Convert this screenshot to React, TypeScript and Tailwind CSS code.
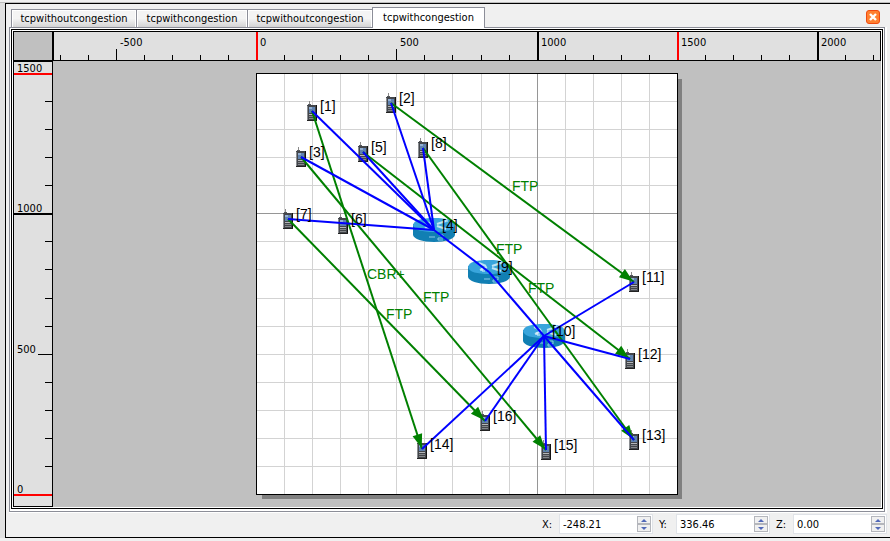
import React from "react";

type Point = { x: number; y: number };
type Node = Point & { id: number; kind: "host" | "router" };

const nodes: Node[] = [
  { id: 1, x: 312, y: 111, kind: "host" },
  { id: 2, x: 391, y: 103, kind: "host" },
  { id: 3, x: 301, y: 157, kind: "host" },
  { id: 4, x: 434, y: 230, kind: "router" },
  { id: 5, x: 363, y: 152, kind: "host" },
  { id: 6, x: 343, y: 224, kind: "host" },
  { id: 7, x: 288, y: 219, kind: "host" },
  { id: 8, x: 423, y: 148, kind: "host" },
  { id: 9, x: 489, y: 272, kind: "router" },
  { id: 10, x: 544, y: 336, kind: "router" },
  { id: 11, x: 634, y: 282, kind: "host" },
  { id: 12, x: 630, y: 359, kind: "host" },
  { id: 13, x: 634, y: 440, kind: "host" },
  { id: 14, x: 422, y: 449, kind: "host" },
  { id: 15, x: 546, y: 450, kind: "host" },
  { id: 16, x: 485, y: 421, kind: "host" },
];

const links: [number, number][] = [
  [1, 4], [2, 4], [3, 4], [5, 4], [7, 4], [8, 4], [4, 9],
  [9, 10], [10, 11], [10, 12], [10, 13], [10, 14], [10, 15], [10, 16],
];

const flows: [number, number, string][] = [
  [1, 14, "CBR+"], [2, 11, "FTP"], [3, 15, "FTP"],
  [5, 12, "FTP"], [7, 16, "FTP"], [8, 13, "FTP"],
];

const find = (id: number) => nodes.find((n) => n.id === id)!;

// One ruler step is 100 units; 1500 units span 421 pixels.
const step = (n: number) => Math.round((n * 421) / 15);
const range = (from: number, to: number) =>
  Array.from({ length: to - from + 1 }, (_, i) => from + i);

function Host({ x, y }: Point) {
  return (
    <g transform={`translate(${x - 5} ${y - 10})`} shapeRendering="crispEdges">
      <rect x="2" y="0" width="1" height="4" fill="#8a8a8a" />
      <rect x="1" y="3" width="3" height="1" fill="#55585c" />
      <rect x="0" y="4" width="10" height="16" fill="#43464b" />
      <rect x="0" y="5" width="1" height="14" fill="#8b8e92" />
      <rect x="9" y="4" width="1" height="16" fill="#111" />
      <rect x="0" y="19" width="10" height="1" fill="#222" />
      <rect x="2" y="6" width="6" height="6" fill="#5f82b0" />
      <rect x="2" y="6" width="3" height="2" fill="#93afd2" />
      <rect x="2" y="13" width="6" height="1" fill="#b6b8ba" />
      <rect x="2" y="15" width="6" height="1" fill="#85888b" />
      <rect x="2" y="17" width="6" height="1" fill="#85888b" />
    </g>
  );
}

function Router({ x, y }: Point) {
  return (
    <g transform={`translate(${x - 21} ${y - 12})`}>
      <path d="M0 6v11c1 4 9 7 21 7s20-3 21-7V6z" fill="#117fb3" />
      <path d="M0 7C1 2 8 0 21 0s20 2 21 7c-1 5-9 7-21 7S1 12 0 7z" fill="#39a5dc" />
      <path d="M11 3l7 3M12 10l7-3M24 6l9-3M24 8l9 3" stroke="#bfe4f5" strokeWidth="2" />
      <path d="M31 2h3v2M14 8v3h3" fill="none" stroke="#e4f5fc" strokeWidth="1" />
      <path d="M16 19h6M26 17h4v3h-5v2h5" fill="none" stroke="#8ccbe8" strokeWidth="1" />
    </g>
  );
}

function Flow({ from, to }: { from: Point; to: Point }) {
  const angle = (Math.atan2(to.y - from.y, to.x - from.x) * 180) / Math.PI;
  return (
    <g stroke="#008000" fill="#008000">
      <line x1={from.x} y1={from.y} x2={to.x} y2={to.y} strokeWidth="2" />
      <path d="M-1 0L-15 -5V5z" stroke="none" transform={`translate(${to.x} ${to.y}) rotate(${angle})`} />
    </g>
  );
}

function Canvas() {
  return (
    <svg className="block h-[446px] w-full" role="img" aria-label="Network topology">
      <g transform="translate(-53 -61)">
        <rect x="262" y="79" width="420" height="420" fill="#808080" />
        <rect x="256" y="73" width="422" height="422" fill="#000" />
        <rect x="257" y="74" width="420" height="420" fill="#fff" />
        {range(1, 14).map((n) => (
          <g key={n} fill="#d3d3d3">
            <rect x={256 + step(n)} y="74" width="1" height="420" />
            <rect x="257" y={494 - step(n)} width="420" height="1" />
          </g>
        ))}
        <rect x="537" y="74" width="1" height="420" fill="#969696" />
        <rect x="257" y="213" width="420" height="1" fill="#969696" />
        {nodes.map((n) => (n.kind === "host" ? <Host key={n.id} {...n} /> : <Router key={n.id} {...n} />))}
        {flows.map(([a, b]) => (
          <Flow key={`${a}-${b}`} from={find(a)} to={find(b)} />
        ))}
        {links.map(([a, b]) => (
          <line
            key={`${a}-${b}`}
            x1={find(a).x}
            y1={find(a).y}
            x2={find(b).x}
            y2={find(b).y}
            stroke="#00f"
            strokeWidth="2"
          />
        ))}
        <g className="font-['Liberation_Sans',Arial,sans-serif] text-[14px]">
          {flows.map(([a, b, label]) => (
            <text
              key={`${a}-${b}`}
              x={Math.floor((find(a).x + find(b).x) / 2)}
              y={Math.floor((find(a).y + find(b).y) / 2) - 1}
              fill="#008000"
            >
              {label}
            </text>
          ))}
          {nodes.map((n) => (
            <text key={n.id} x={n.x + 8} y={n.y}>
              [{n.id}]
            </text>
          ))}
        </g>
      </g>
    </svg>
  );
}

function TopRuler() {
  return (
    <svg className="block h-7 w-full">
      <g transform="translate(-54 -32)">
        {range(-7, 22).map((n) => {
          const x = 256 + step(n);
          const major = n % 10 === 0 || n === 15;
          return (
            <g key={n}>
              <rect
                x={x}
                y={major ? 32 : n % 5 === 0 ? 49 : 55}
                width={major ? 2 : 1}
                height="28"
                fill={n === 0 || n === 15 ? "#f00" : "#000"}
              />
              {n % 5 === 0 && (
                <text x={x + 4} y="46">
                  {n * 100}
                </text>
              )}
            </g>
          );
        })}
      </g>
    </svg>
  );
}

function SideRuler() {
  return (
    <svg className="block h-[444px] w-full">
      <g transform="translate(-14 -62)">
        {range(0, 15).map((n) => {
          const y = 494 - step(n);
          const major = n % 10 === 0 || n === 15;
          const x = major ? 14 : n % 5 === 0 ? 38 : 45;
          return (
            <g key={n}>
              <rect
                x={x}
                y={y}
                width={52 - x}
                height={major ? 2 : 1}
                fill={n === 0 || n === 15 ? "#f00" : "#000"}
              />
              {n % 5 === 0 && (
                <text x="17" y={y - 1}>
                  {n * 100}
                </text>
              )}
            </g>
          );
        })}
      </g>
    </svg>
  );
}

const tabs = ["tcpwithoutcongestion", "tcpwithcongestion", "tcpwithoutcongestion", "tcpwithcongestion"];

function Tabs() {
  return (
    <div className="flex items-end pt-[3px] pl-[5px]">
      <div role="tablist" className="flex items-end">
        {tabs.map((name, i) =>
          i === 3 ? (
            <button
              key={i}
              role="tab"
              aria-selected="true"
              className="z-10 -mb-px h-[21px] w-[113px] border border-b-0 border-[#8c8e98] bg-white text-center whitespace-nowrap"
            >
              {name}
            </button>
          ) : (
            <button
              key={i}
              role="tab"
              aria-selected="false"
              className={`h-[18px] border border-r-0 border-b-0 border-[#8c8e98] bg-linear-to-b from-[#f4f4f4] from-50% to-[#d4d4d4] pt-px text-center whitespace-nowrap shadow-[inset_1px_1px_#fff,inset_-1px_0_#fff] ${
                i === 1 ? "w-[111px]" : "w-[125px]"
              }`}
            >
              {name}
            </button>
          ),
        )}
      </div>
      <button
        aria-label="Close"
        className="mr-[10px] mb-[3px] ml-auto flex size-[14px] items-center justify-center rounded-[3px] border border-[#f04a10] bg-[#ff8030]"
      >
        <svg className="size-2" viewBox="0 0 8 8" stroke="#fff" strokeWidth="2.4">
          <path d="M1 1l6 6M7 1L1 7" />
        </svg>
      </button>
    </div>
  );
}

function Spin({ label, value }: { label: string; value: string }) {
  return (
    <div className="flex items-center">
      <label htmlFor={label} className="w-[17px] pt-0.5">
        {label}:
      </label>
      <div className="flex h-[20px] w-[94px] border border-[#e0e3e8] bg-white pr-px">
        <input id={label} defaultValue={value} className="min-w-0 flex-1 bg-transparent pt-0.5 pl-[3px] outline-none" />
        <div className="flex w-[14px] flex-col py-px">
          {["M0 3L3 0l3 3z", "M0 0h6L3 3z"].map((d, i) => (
            <button
              key={d}
              aria-label={i === 0 ? `Increase ${label}` : `Decrease ${label}`}
              className="flex flex-1 items-center justify-center border border-[#b4b6bc] bg-[#f0f0f0]"
            >
              <svg className="h-[3px] w-[6px]" viewBox="0 0 6 3" fill="#5068b8">
                <path d={d} />
              </svg>
            </button>
          ))}
        </div>
      </div>
    </div>
  );
}

export default function App() {
  return (
    <div className="min-h-screen overflow-hidden bg-[#f0f0f0] font-['DejaVu_Sans_Condensed','DejaVu_Sans',sans-serif] text-[11px] leading-[14px] text-black">
      <div className="h-[3px] border-b border-[#bdbdbd]" />
      <div className="flex">
        <div className="w-[5px] bg-[#e1e1e1]" />
        <div className="min-w-0 flex-1 border-y border-l border-black">
          <Tabs />
          <div className="mr-[3px] ml-[3px] border-r-2 border-b border-white">
            <div className="border border-[#8c8e98] bg-white p-px">
              <div className="mb-px border border-black p-px">
                <div className="flex border-t border-l border-black bg-[#c0c0c0]">
                  <div className="w-[39px] shrink-0">
                    <div className="h-[30px] border-r border-b-2 border-black bg-[#c0c0c0]" />
                    <div className="border-r border-b border-black bg-[#e0e0e0]">
                      <SideRuler />
                    </div>
                  </div>
                  <div className="min-w-0 flex-1">
                    <div className="border-x border-b border-black bg-[#e0e0e0]">
                      <TopRuler />
                    </div>
                    <Canvas />
                  </div>
                </div>
              </div>
            </div>
          </div>
          <div className="flex justify-end gap-[6px] pt-px pr-[3px] pb-[3px]">
            <Spin label="X" value="-248.21" />
            <Spin label="Y" value="336.46" />
            <Spin label="Z" value="0.00" />
          </div>
        </div>
      </div>
    </div>
  );
}
